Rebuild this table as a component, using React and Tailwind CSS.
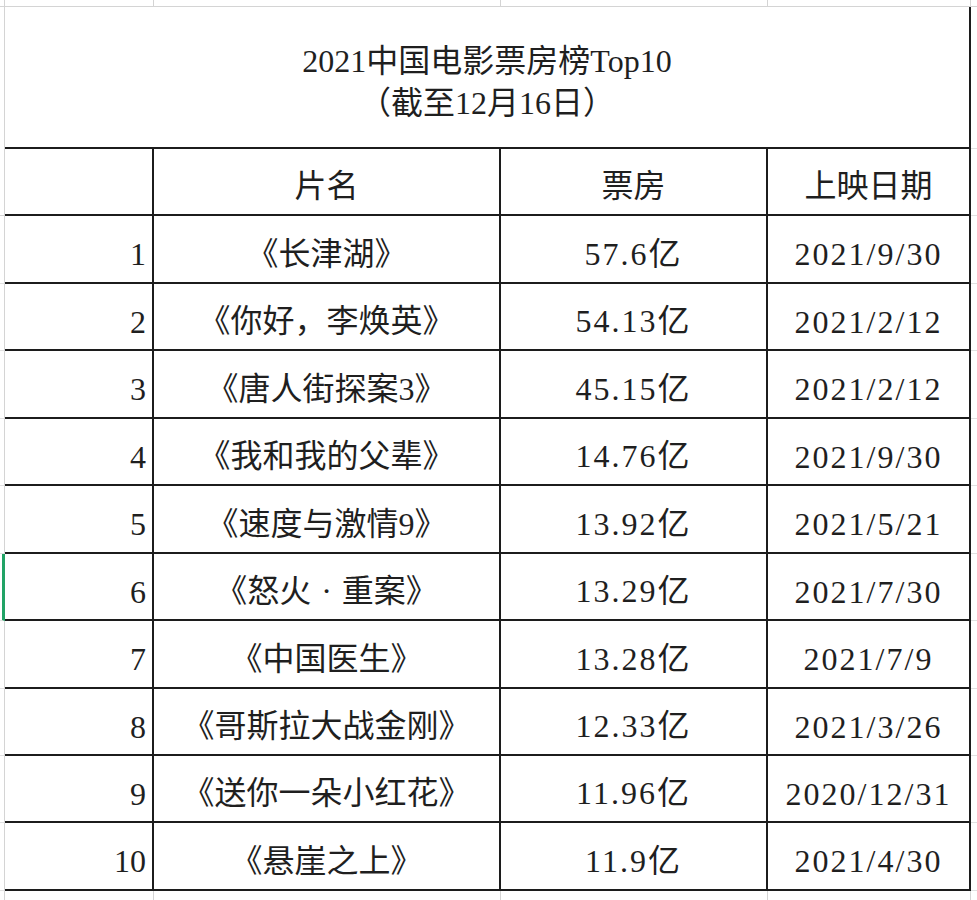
import React from 'react';

const rows = [
  { no: '1', title: '《长津湖》', box: '57.6亿', date: '2021/9/30' },
  { no: '2', title: '《你好，李焕英》', box: '54.13亿', date: '2021/2/12' },
  { no: '3', title: '《唐人街探案3》', box: '45.15亿', date: '2021/2/12' },
  { no: '4', title: '《我和我的父辈》', box: '14.76亿', date: '2021/9/30' },
  { no: '5', title: '《速度与激情9》', box: '13.92亿', date: '2021/5/21' },
  { no: '6', title: '《怒火·重案》', box: '13.29亿', date: '2021/7/30' },
  { no: '7', title: '《中国医生》', box: '13.28亿', date: '2021/7/9' },
  { no: '8', title: '《哥斯拉大战金刚》', box: '12.33亿', date: '2021/3/26' },
  { no: '9', title: '《送你一朵小红花》', box: '11.96亿', date: '2020/12/31' },
  { no: '10', title: '《悬崖之上》', box: '11.9亿', date: '2021/4/30' },
];

// row heights follow the sheet's uneven pixel rows
const heights = [
  'h-[68px]', 'h-[67px]', 'h-[68px]', 'h-[67px]', 'h-[68px]',
  'h-[67px]', 'h-[68px]', 'h-[67px]', 'h-[67px]', 'h-[68px]',
];

const font = { fontFamily: '"Liberation Serif", "Noto Sans CJK SC", serif' };

const renderTitle = (title) => {
  if (!title.includes('·')) return title;
  const [a, b] = title.split('·');
  return (
    <>
      {a}
      <span className="px-[10px]">·</span>
      {b}
    </>
  );
};

const Row = ({ row, idx }) => (
  <div className={`flex ${heights[idx]}`}>
    <div
      className={`w-[5px] shrink-0 border-b border-[#e1e1e1] ${
        row.no === '6' ? 'border-r-[3px] border-r-[#21a366]' : 'border-r border-r-[#d4d4d4]'
      }`}
    />
    <div className="w-[149px] shrink-0 border-r-2 border-b-2 border-[#1c1c1c] flex items-center justify-end pr-[6px] pt-[10px]">
      {row.no}
    </div>
    <div className="w-[347px] shrink-0 border-r-2 border-b-2 border-[#1c1c1c] flex items-center justify-center pt-[9px]">
      {renderTitle(row.title)}
    </div>
    <div className="w-[267px] shrink-0 border-r-2 border-b-2 border-[#1c1c1c] flex items-center justify-center pt-[9px] tracking-[2px]">
      {row.box}
    </div>
    <div className="w-[203px] shrink-0 border-r-2 border-b-2 border-[#1c1c1c] flex items-center justify-center pt-[10px] tracking-[2px]">
      {row.date}
    </div>
    <div className="flex-1 border-b border-[#e1e1e1]" />
  </div>
);

export default function App() {
  return (
    <div
      className="w-[977px] h-[900px] bg-white overflow-hidden flex flex-col text-[32px] leading-none text-[#1f1f1f]"
      style={font}
    >
      {/* sheet row above the table */}
      <div className="flex h-[7px] shrink-0 border-b border-[#d4d4d4]">
        <div className="w-[5px] border-r border-[#d4d4d4]" />
        <div className="w-[149px] border-r border-[#d4d4d4]" />
        <div className="w-[347px] border-r border-[#d4d4d4]" />
        <div className="w-[267px] border-r border-[#d4d4d4]" />
        <div className="w-[203px] border-r border-[#d4d4d4]" />
        <div className="flex-1" />
      </div>

      {/* merged title cell */}
      <div className="flex h-[142px] shrink-0">
        <div className="w-[5px] shrink-0 border-r border-[#d4d4d4]" />
        <div className="w-[966px] shrink-0 border-r-2 border-b-2 border-[#1c1c1c] flex flex-col items-center justify-center pt-[10px] leading-[42px]">
          <div>2021中国电影票房榜Top10</div>
          <div>（截至12月16日）</div>
        </div>
        <div className="flex-1 border-b border-[#e1e1e1]" />
      </div>

      {/* header */}
      <div className="flex h-[67px] shrink-0">
        <div className="w-[5px] shrink-0 border-r border-b border-[#d4d4d4]" />
        <div className="w-[149px] shrink-0 border-r-2 border-b-2 border-[#1c1c1c]" />
        <div className="w-[347px] shrink-0 border-r-2 border-b-2 border-[#1c1c1c] flex items-center justify-center pt-[8px]">
          片名
        </div>
        <div className="w-[267px] shrink-0 border-r-2 border-b-2 border-[#1c1c1c] flex items-center justify-center pt-[8px]">
          票房
        </div>
        <div className="w-[203px] shrink-0 border-r-2 border-b-2 border-[#1c1c1c] flex items-center justify-center pt-[8px]">
          上映日期
        </div>
        <div className="flex-1 border-b border-[#e1e1e1]" />
      </div>

      {rows.map((row, idx) => (
        <Row key={row.no} row={row} idx={idx} />
      ))}

      {/* empty sheet row below */}
      <div className="flex flex-1">
        <div className="w-[5px] border-r border-[#d4d4d4]" />
        <div className="w-[149px] border-r border-[#d4d4d4]" />
        <div className="w-[347px] border-r border-[#d4d4d4]" />
        <div className="w-[267px] border-r border-[#d4d4d4]" />
        <div className="w-[203px] border-r border-[#d4d4d4]" />
        <div className="flex-1" />
      </div>
    </div>
  );
}
